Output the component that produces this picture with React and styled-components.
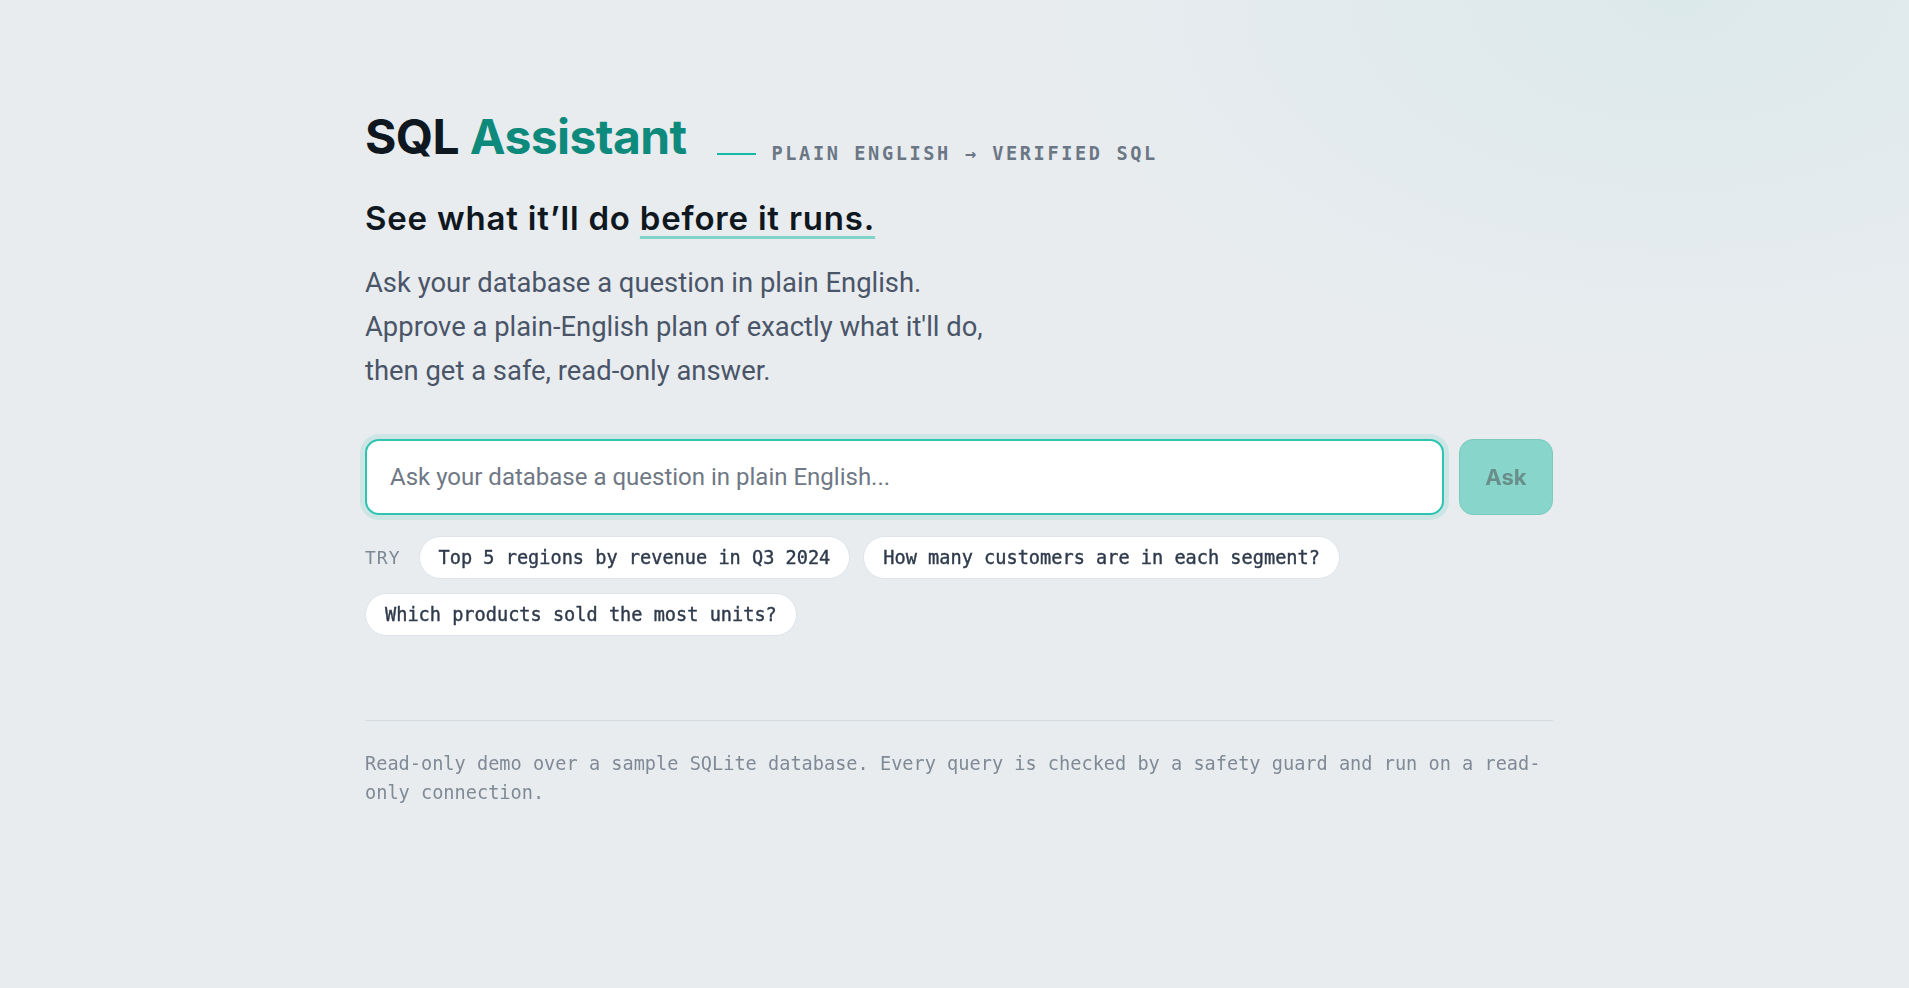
import React from "react";
import styled, { createGlobalStyle } from "styled-components";

const Global = createGlobalStyle`
  html, body { margin: 0; padding: 0; }
  body {
    background: #e8ecef;
    font-family: "Inter", "Liberation Sans", sans-serif;
  }
  * { box-sizing: border-box; }
`;

const Page = styled.main`
  min-height: 100vh;
  padding: 112.5px 0 80px 9px;
  background:
    radial-gradient(ellipse 900px 520px at 88% 0%, rgba(216, 232, 233, 0.75), rgba(232, 236, 239, 0) 70%),
    #e8ecef;
`;

const Container = styled.div`
  max-width: 1188px;
  margin: 0 auto;
`;

const Header = styled.header`
  display: flex;
  align-items: flex-end;
  gap: 30px;
`;

const Title = styled.h1`
  margin: 0;
  font-family: "Inter", "Liberation Sans", sans-serif;
  font-size: 48px;
  font-weight: 700;
  line-height: 1;
  letter-spacing: -0.6px;
  color: #0f1720;
`;

const Accent = styled.span`
  color: #0d8a7b;
`;

const Kicker = styled.div`
  display: flex;
  align-items: center;
  gap: 16px;
  margin-bottom: -3px;
  font-family: "DejaVu Sans Mono", "Liberation Mono", monospace;
  font-size: 18.6px;
  font-weight: 700;
  line-height: 1;
  letter-spacing: 2.6px;
  color: #6b7785;
`;

const Dash = styled.span`
  display: block;
  width: 39px;
  height: 1.5px;
  background: #14b8a6;
`;

const Tagline = styled.h2`
  margin: 38px 0 0;
  font-family: "Inter", "Liberation Sans", sans-serif;
  font-size: 33px;
  font-weight: 600;
  line-height: 1.2;
  letter-spacing: 0.8px;
  color: #0f1720;
`;

const Mark = styled.span`
  text-decoration: underline;
  text-decoration-color: #7fd3c9;
  text-decoration-thickness: 3px;
  text-underline-offset: 6px;
  text-decoration-skip-ink: none;
`;

const Lede = styled.p`
  margin: 23.2px 0 0;
  font-family: "Roboto", "Liberation Sans", sans-serif;
  font-size: 27.4px;
  line-height: 44px;
  color: #4a5568;
`;

const AskRow = styled.form`
  display: flex;
  gap: 15px;
  margin-top: 45.3px;
`;

const QueryInput = styled.input`
  flex: 1;
  height: 76px;
  padding: 0 23px;
  border: 2px solid #2ec4b1;
  border-radius: 14px;
  background: #ffffff;
  box-shadow: 0 0 0 5px rgba(45, 190, 170, 0.14);
  font-family: "Roboto", "Liberation Sans", sans-serif;
  font-size: 24px;
  color: #0f1720;
  caret-color: #0f1720;
  outline: none;
  &::placeholder {
    color: #6f7885;
  }
`;

const AskButton = styled.button`
  width: 94px;
  height: 76px;
  border: 1px solid #7bcabf;
  border-radius: 14px;
  background: #88d5cc;
  color: #6a8f8a;
  font-family: "Inter", "Liberation Sans", sans-serif;
  font-size: 22px;
  font-weight: 700;
  cursor: not-allowed;
`;

const Suggestions = styled.div`
  display: flex;
  flex-wrap: wrap;
  align-items: center;
  gap: 14px 13px;
  margin-top: 21px;
`;

const TryLabel = styled.span`
  margin-right: 5px;
  font-family: "DejaVu Sans Mono", "Liberation Mono", monospace;
  font-size: 18px;
  letter-spacing: 1px;
  color: #7c8896;
`;

const Chip = styled.button`
  height: 43px;
  padding: 0 19px;
  border: 1px solid #dde3e8;
  border-radius: 999px;
  background: #ffffff;
  font-family: "DejaVu Sans Mono", "Liberation Mono", monospace;
  font-size: 18.6px;
  color: #2f3b4c;
  -webkit-text-stroke: 0.4px currentColor;
  cursor: pointer;
`;

const Divider = styled.hr`
  margin: 84px 0 0;
  border: 0;
  border-top: 1px solid #d5dce1;
`;

const Footnote = styled.p`
  margin: 0;
  padding-top: 28px;
  font-family: "DejaVu Sans Mono", "Liberation Mono", monospace;
  font-size: 18.6px;
  line-height: 29px;
  color: #7f8a96;
`;

const examples = [
  "Top 5 regions by revenue in Q3 2024",
  "How many customers are in each segment?",
  "Which products sold the most units?",
];

export default function App() {
  return (
    <>
      <Global />
      <Page>
        <Container>
          <Header>
            <Title>
              SQL <Accent>Assistant</Accent>
            </Title>
            <Kicker>
              <Dash />
              <span>PLAIN ENGLISH → VERIFIED SQL</span>
            </Kicker>
          </Header>
          <Tagline>
            See what it’ll do <Mark>before it runs.</Mark>
          </Tagline>
          <Lede>
            Ask your database a question in plain English.
            <br />
            Approve a plain-English plan of exactly what it'll do,
            <br />
            then get a safe, read-only answer.
          </Lede>
          <AskRow onSubmit={(e) => e.preventDefault()}>
            <QueryInput autoFocus placeholder="Ask your database a question in plain English..." />
            <AskButton type="submit" disabled>
              Ask
            </AskButton>
          </AskRow>
          <Suggestions>
            <TryLabel>TRY</TryLabel>
            {examples.map((q) => (
              <Chip key={q} type="button">
                {q}
              </Chip>
            ))}
          </Suggestions>
          <Divider />
          <Footnote>
            Read-only demo over a sample SQLite database. Every query is checked by a safety guard and run on a read-only connection.
          </Footnote>
        </Container>
      </Page>
    </>
  );
}
